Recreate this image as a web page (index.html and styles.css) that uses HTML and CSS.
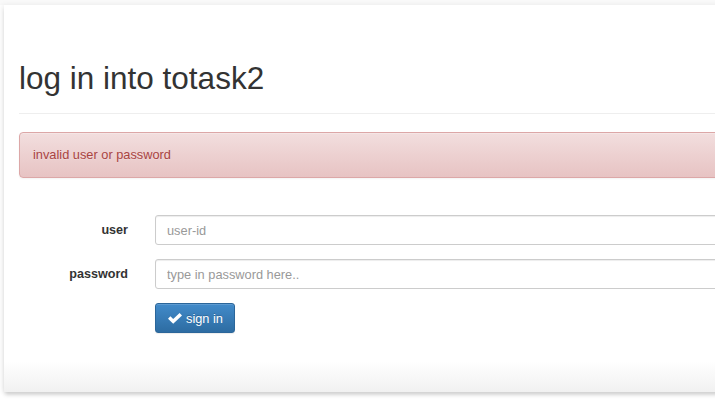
FILE: index.html
```html
<!DOCTYPE html>
<html lang="en">
<head>
<meta charset="utf-8">
<title>log in into totask2</title>
<link rel="stylesheet" href="styles.css">
</head>
<body>
<div class="sheet">
  <div class="container">
    <div class="page-header">
      <h1 class="title">log in into totask2</h1>
    </div>
    <div class="alert">invalid user or password</div>
    <form class="form">
      <label class="label" for="user">user</label>
      <input class="input" id="user" type="text" placeholder="user-id">
      <label class="label" for="password">password</label>
      <input class="input" id="password" type="password" placeholder="type in password here..">
      <div class="spacer"></div>
      <div class="actions">
        <button class="btn" type="button">
          <svg class="check" width="14" height="11" viewBox="0 0 14 11" aria-hidden="true"><path d="M0 5.7 L2.4 3.3 L5.2 6.1 L11.6 0 L14 2.4 L5.2 10.8 Z" fill="#fff"/></svg>
          <span>sign in</span>
        </button>
      </div>
    </form>
  </div>
</div>
</body>
</html>
```
FILE: styles.css
```css
html, body {
  margin: 0;
  padding: 0;
}
body {
  width: 715px;
  height: 408px;
  overflow: hidden;
  background: linear-gradient(to bottom, #f9f9f9 0, #f9f9f9 5px, #ffffff 5px);
  font-family: "Liberation Sans", Arial, sans-serif;
  color: #333;
}
.sheet {
  margin: 5px 0 0 4px;
  width: 760px;
  height: 387px;
  background: linear-gradient(to bottom, #ffffff 0, #ffffff 356px, #f1f1f1 387px);
  box-shadow: -2px 0 5px rgba(0, 0, 0, 0.07), 0 4px 4px -1px rgba(0, 0, 0, 0.16);
}
.container {
  padding: 55px 0 0 15px;
}
.page-header {
  padding-bottom: 17px;
  border-bottom: 1px solid #eeeeee;
}
.title {
  margin: 0;
  font-size: 31.5px;
  line-height: 36px;
  font-weight: 500;
  color: #333;
}
.alert {
  margin-top: 18px;
  padding: 13px 13px;
  border: 1px solid #dca7a7;
  border-radius: 4px;
  background-image: linear-gradient(to bottom, #f2dede 0, #e7c3c3 100%);
  box-shadow: inset 0 1px 0 rgba(255, 255, 255, 0.25), 0 1px 2px rgba(0, 0, 0, 0.05);
  color: #a94442;
  font-size: 12.8px;
  line-height: 18px;
  text-shadow: 0 1px 0 rgba(255, 255, 255, 0.2);
}
.form {
  margin-top: 37px;
  display: grid;
  grid-template-columns: 109px 1fr;
  column-gap: 27px;
  row-gap: 14px;
  align-items: center;
}
.label {
  text-align: right;
  font-weight: bold;
  font-size: 12.6px;
  line-height: 18px;
  color: #333;
}
.input {
  box-sizing: border-box;
  height: 30px;
  width: 100%;
  margin: 0;
  padding: 0 11px;
  border: 1px solid #cccccc;
  border-radius: 3px;
  background: #fff;
  box-shadow: inset 0 1px 1px rgba(0, 0, 0, 0.075);
  font-family: "Liberation Sans", Arial, sans-serif;
  font-size: 12.8px;
  color: #555;
}
.input::placeholder {
  color: #999999;
}
.btn {
  box-sizing: border-box;
  height: 30px;
  display: inline-flex;
  align-items: center;
  gap: 4px;
  margin: 0;
  padding: 0 11px 0 12px;
  border: 1px solid #2b669a;
  border-radius: 3px;
  background-image: linear-gradient(to bottom, #428bca 0, #2d6ca2 100%);
  box-shadow: inset 0 1px 0 rgba(255, 255, 255, 0.15), 0 1px 1px rgba(0, 0, 0, 0.075);
  color: #fff;
  font-family: "Liberation Sans", Arial, sans-serif;
  font-size: 12.8px;
  text-shadow: 0 -1px 0 rgba(0, 0, 0, 0.2);
}
.check {
  display: block;
  margin-top: 1px;
}
```
